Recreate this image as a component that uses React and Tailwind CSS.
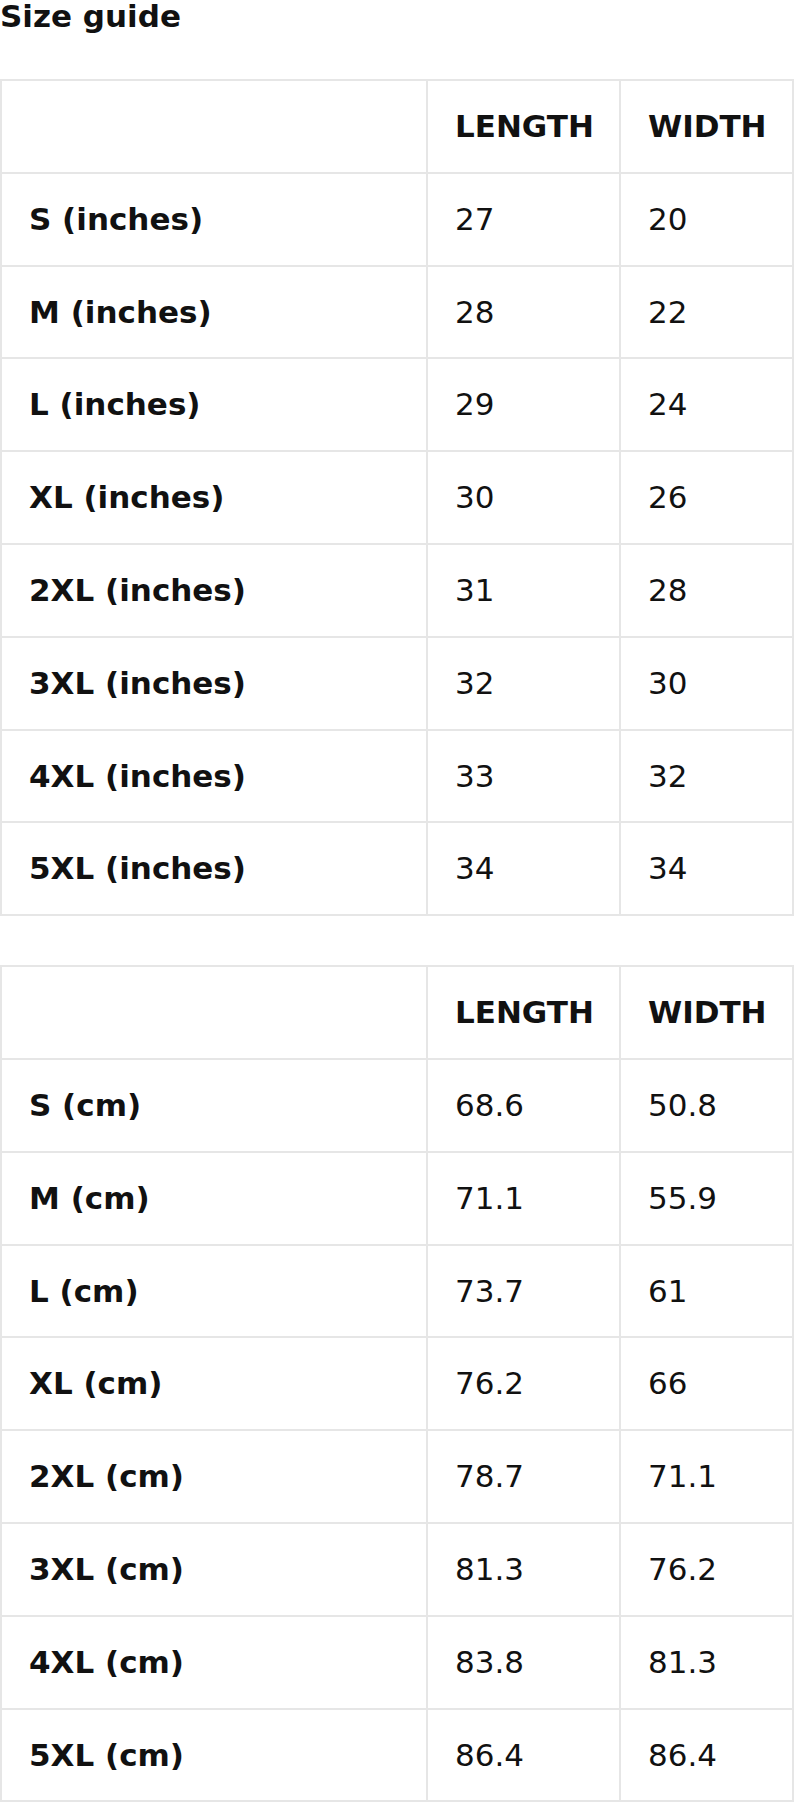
import React from "react";

const inches = [
  ["S (inches)", "27", "20"],
  ["M (inches)", "28", "22"],
  ["L (inches)", "29", "24"],
  ["XL (inches)", "30", "26"],
  ["2XL (inches)", "31", "28"],
  ["3XL (inches)", "32", "30"],
  ["4XL (inches)", "33", "32"],
  ["5XL (inches)", "34", "34"],
];

const cm = [
  ["S (cm)", "68.6", "50.8"],
  ["M (cm)", "71.1", "55.9"],
  ["L (cm)", "73.7", "61"],
  ["XL (cm)", "76.2", "66"],
  ["2XL (cm)", "78.7", "71.1"],
  ["3XL (cm)", "81.3", "76.2"],
  ["4XL (cm)", "83.8", "81.3"],
  ["5XL (cm)", "86.4", "86.4"],
];

const cell = "border-2 border-[#e6e6e6] px-[27px] py-[27px] leading-[36.8px] text-left align-middle";

const SizeTable = ({ rows }) => {
  return (
    <table className="w-[792px] border-collapse table-fixed">
      <colgroup>
        <col className="w-[426px]" />
        <col className="w-[193px]" />
        <col className="w-[173px]" />
      </colgroup>
      <thead>
        <tr>
          <th className={cell}></th>
          <th className={cell + " font-bold"}>LENGTH</th>
          <th className={cell + " font-bold"}>WIDTH</th>
        </tr>
      </thead>
      <tbody>
        {rows.map((r) => (
          <tr key={r[0]}>
            <td className={cell + " font-bold"}>{r[0]}</td>
            <td className={cell}>{r[1]}</td>
            <td className={cell}>{r[2]}</td>
          </tr>
        ))}
      </tbody>
    </table>
  );
};

const App = () => {
  return (
    <div className="bg-white text-[#111] text-[31px] font-['DejaVu_Sans',sans-serif] w-[794px]">
      <h2 className="font-bold leading-[32px]">Size guide</h2>

      {/* inches */}
      <div className="mt-[47px]">
        <SizeTable rows={inches} />
      </div>

      {/* cm */}
      <div className="mt-[49px]">
        <SizeTable rows={cm} />
      </div>
    </div>
  );
};

export default App;
